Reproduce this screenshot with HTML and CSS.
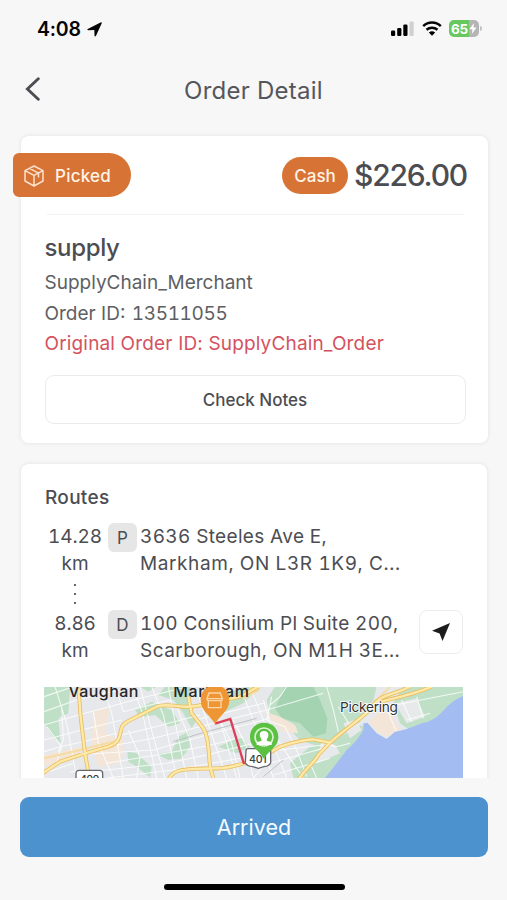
FILE: index.html
```html
<!DOCTYPE html>
<html lang="en">
<head>
<meta charset="utf-8">
<meta name="viewport" content="width=device-width, initial-scale=1">
<title>Order Detail</title>
<link rel="stylesheet" href="styles.css">
</head>
<body>
<div class="screen">
  <header class="status">
    <div class="clock"><span class="time">4:08</span>
      <svg class="loc" viewBox="0 0 16 16"><path d="M.8 7.4 14.4.4Q16.3-.1 15.6 1.6L9.6 14.7Q8.4 16.6 8 14.4L7.8 8.6 1.4 8.8Q-.6 8.4.8 7.4Z"/></svg>
    </div>
    <div class="indicators">
      <svg class="signal" viewBox="0 0 23 16"><rect x="0" y="9.5" width="4.2" height="5.5" rx="1.2"/><rect x="6.2" y="7" width="4.2" height="8" rx="1.2"/><rect x="12.3" y="3.5" width="4.2" height="11.5" rx="1.2"/><rect class="off" x="18.5" y="0.5" width="4.2" height="14.5" rx="1.2"/></svg>
      <svg class="wifi" viewBox="0 0 20 15"><path class="arc" d="M1.2 5.2C6.2.3 13.8.3 18.8 5.2M4.5 8.8C7.7 5.9 12.3 5.9 15.5 8.8"/><path d="M6.8 11.4Q10 8.9 13.2 11.4L10 14.7Z"/></svg>
      <div class="battery"><span>65</span><svg viewBox="0 0 8 11"><path d="M5 0 .5 6.2H3.5L2.8 11 7.6 4.6H4.5Z"/></svg></div>
    </div>
  </header>
  <nav class="topbar">
    <svg class="back" viewBox="0 0 16 24"><path d="M13.3 1.8 2.4 12 13.3 22.2"/></svg>
    <h1>Order Detail</h1>
  </nav>
  <main class="content">
    <section class="card order">
      <div class="summary">
        <div class="picked">
          <svg viewBox="0 0 20 22"><path d="M10 1 19 5.7V16L10 21 1 16V5.7ZM1 5.7 10 10.3 19 5.7M10 10.3V21M5.5 3.4 14.5 8.2V12.4"/></svg>
          <span>Picked</span>
        </div>
        <div class="payment"><span class="cash">Cash</span><span class="amount">$226.00</span></div>
      </div>
      <div class="details">
        <h2>supply</h2>
        <p class="merchant">SupplyChain_Merchant</p>
        <p class="oid">Order ID: <span>13511055</span></p>
        <p class="original">Original Order ID: SupplyChain_Order</p>
        <button class="notes">Check Notes</button>
      </div>
    </section>
    <section class="card routes">
      <h3>Routes</h3>
      <div class="stop">
        <div class="distance">14.28<br>km</div>
        <span class="tag">P</span>
        <p class="address a1">3636 Steeles Ave E,<br><span class="l2">Markham, ON L3R 1K9, C...</span></p>
      </div>
      <div class="dots"><i></i><i></i><i></i></div>
      <div class="stop">
        <div class="distance">8.86<br>km</div>
        <span class="tag">D</span>
        <p class="address a2">100 Consilium Pl Suite 200,<br><span class="l2">Scarborough, ON M1H 3E...</span></p>
        <button class="navigate" aria-label="Navigate"><svg viewBox="0 0 18 18"><path d="M0 7.8 18 0 10.5 18 7.6 10.6Z"/></svg></button>
      </div>
      <svg class="map" viewBox="12 21 1257 273" preserveAspectRatio="none">
        <rect class="land" x="0" y="0" width="1280" height="300"/>
        <g class="park">
          <path d="M0 0H92L85 100 55 115 62 190 38 170 12 130ZM285 90 335 65 395 90 420 130 385 140 345 105 300 112ZM262 215 290 220 335 262 330 292 290 260 265 245ZM375 20H450L450 90 470 120 455 145 430 100 400 60 355 45ZM415 170 445 155 450 200 425 235 385 240 350 222 395 215ZM300 20H350L325 35ZM535 200 600 170 630 200 590 220ZM560 40 620 20H660L610 70 545 100Z"/>
          <path d="M705 20H1010L1000 60 960 125 890 180 850 205 780 180 740 140 690 100 680 60ZM1090 20H1269V65L1200 110 1110 150 1080 130 1060 70ZM860 190 910 165 965 135 985 160 930 215 890 260 860 294H760L750 250 810 200Z"/>
        </g>
        <path class="darkpark" d="M735 20H820L840 60 862 115 858 160 820 170 780 130 725 115 705 85Z"/>
        <path class="sand" d="M160 90 210 85 195 160 250 180 245 250 175 260 155 200ZM985 125 1030 80 1060 110 1080 150 1040 170 1010 155ZM675 95 720 110 765 135 775 160 730 155 700 130ZM12 225 120 200 120 222 12 260Z"/>
        <path class="suburb" d="M1065 70 1130 55 1155 110 1100 130ZM910 130 945 120 965 150 930 175ZM845 180 885 195 900 220 830 250Z"/>
        <g class="streets">
          <path d="M12 50 100 20M12 95 110 60 280 20M12 135 115 105 320 50 440 21M12 180 125 150 245 120M12 215 60 200 130 185 230 160M250 95 390 60M245 165 340 142 480 105M230 195 340 175 500 135 680 90 850 40M150 222 340 210 500 165 690 115M200 250 350 225 500 198 610 170M90 275 200 270 380 250 500 225 660 185M200 294 400 270 600 235M460 80 640 40M465 120 670 70M610 225 720 210 850 195M670 255 760 230 850 205M700 285 870 235M12 280 100 250M1040 80 1269 35M1100 120 1170 100"/>
          <path d="M45 20 80 130 110 294M20 140 65 200 45 260M65 80 70 180 55 215M190 20 215 100 230 180 250 294M230 30 250 95M280 20 310 110 350 294M300 20 340 170 375 294M335 20 370 105 405 270M385 20 400 100 440 294M410 80 450 180 475 294M160 95 175 190 220 294M470 30 500 120 560 294M500 20 540 120 590 294M535 110 575 190 600 294M580 120 620 200 640 294M600 20 650 145 700 294M630 20 670 120 710 220 740 294M670 60 700 160 760 250 790 294M695 50 680 120 735 140 770 210 800 290M740 20 720 50 690 75M860 20 880 90 895 155M895 80 935 145M1085 60 1115 125M1130 50 1150 115M1045 100 1070 155M690 235 640 294M850 190 890 200 930 190M810 250 830 294M265 150 300 230 290 294"/>
        </g>
        <path class="water" d="M1269 48Q1235 62 1210 92Q1180 125 1145 130Q1100 150 1065 155L1040 177 1010 160 982 128 970 130 970 150Q950 185 920 210Q890 250 855 294H1269Z"/>
        <path class="rail" d="M400 185 500 155 650 115M670 290 730 240"/>
        <path class="secondary" d="M12 235 80 220 240 180M610 55 660 28M1050 20 1000 70"/>
        <path class="highway edge" d="M5 282 60 245 135 220 205 200C235 190 238 175 243 150C245 135 255 128 275 118L350 80C390 66 420 88 470 78L600 50 655 20M115 20 122 110 135 220 148 294M445 50 455 100 490 145C505 170 505 200 510 260L520 294M385 300C400 265 430 268 515 265C570 268 600 250 650 240L720 200C760 185 815 175 830 180L870 188M775 300C800 260 815 258 835 225L870 188C930 135 960 120 1000 80C1020 55 1080 60 1175 20M1000 75C1020 45 1060 45 1110 20"/>
        <path class="highway fill" d="M5 282 60 245 135 220 205 200C235 190 238 175 243 150C245 135 255 128 275 118L350 80C390 66 420 88 470 78L600 50 655 20M115 20 122 110 135 220 148 294M445 50 455 100 490 145C505 170 505 200 510 260L520 294M385 300C400 265 430 268 515 265C570 268 600 250 650 240L720 200C760 185 815 175 830 180L870 188M775 300C800 260 815 258 835 225L870 188C930 135 960 120 1000 80C1020 55 1080 60 1175 20M1000 75C1020 45 1060 45 1110 20"/>
        <g class="shield"><path d="M108 300V280Q108 271 118 271H179Q188 271 188 280V300Z"/><path d="M618 212Q618 206 625 206H684Q692 206 692 212V248Q688 258 672 260L655 265 638 260Q620 258 616 248Z"/></g>
        <text class="num" x="120" y="308" textLength="58">400</text>
        <text class="num" x="627" y="249" textLength="53">401</text>
        <text class="city" x="85" y="51" textLength="210">Vaughan</text>
        <text class="city" x="400" y="51" textLength="227">Markham</text>
        <text class="town" x="900" y="95" textLength="174">Pickering</text>
        <path class="route" d="M525 131 571 117 612 252"/>
        <path class="pickup" d="M525 132C510 104 482 94 482 60C482 34 500 16 525 16C550 16 568 34 568 60C568 94 540 104 525 132Z"/>
        <path class="store" d="M507 39H541L547 56H501ZM501 56Q501 62 507 62H541Q547 62 547 56M505 62V83H543V62"/>
        <path class="dropoff" d="M672 237C657 209 630 202 630 171C630 146 648 128 672 128C697 128 715 146 715 171C715 202 687 209 672 237Z"/>
        <circle class="face" cx="672" cy="171" r="27"/>
        <path class="person" d="M672 153C661 153 657 162 661 172Q665 178 665 182L650 187V195H695V187L680 182Q680 178 684 172C688 162 683 153 672 153Z"/>
      </svg>
    </section>
  </main>
  <footer class="bottom">
    <button class="arrived">Arrived</button>
    <div class="home"></div>
  </footer>
</div>
</body>
</html>
```
FILE: styles.css
```css
* { box-sizing: border-box; margin: 0; padding: 0; }
body { background: #f7f7f7; font-family: Inter, "Liberation Sans", sans-serif; color: #4c4d52; }
button { font: inherit; color: inherit; background: #fff; border: 0; }
svg { display: block; }
h1, h2, h3 { font-weight: 400; }
p, h1, h2, h3, span { white-space: nowrap; }

.screen { width: 507px; height: 900px; display: flex; flex-direction: column; overflow: hidden; }
.status { height: 58px; padding: 0 28px 0 37px; display: flex; justify-content: space-between; align-items: center; color: #050505; }
.clock { display: flex; align-items: center; gap: 6px; }
.time { font-size: 19.5px; font-weight: 600; letter-spacing: -.2px; }
.loc { width: 15px; height: 15px; fill: #050505; }
.indicators { display: flex; align-items: center; }
.signal { width: 23px; height: 16px; margin-right: 8px; }
.signal .off { fill: #d0d0d0; }
.wifi { width: 20px; height: 15px; margin-right: 7px; margin-top: -2px; }
.arc { fill: none; stroke: #050505; stroke-width: 2.5; }
.battery { width: 30px; height: 17px; border-radius: 5px; background: linear-gradient(90deg, #66c85e 0 66%, #b5b5b5 66%); display: flex; align-items: center; justify-content: center; gap: 1px; color: #fff; font-size: 13.5px; font-weight: 700; letter-spacing: -.3px; position: relative; margin-top: -1px; }
.battery svg { width: 8px; height: 11px; fill: #fff; }
.battery::after { content: ""; position: absolute; right: -3px; top: 6px; width: 2px; height: 5px; border-radius: 0 2px 2px 0; background: #c4c4c4; }

.topbar { height: 62px; padding: 0 25px; display: grid; grid-template-columns: 1fr auto 1fr; align-items: center; }
.back { width: 16px; height: 24px; fill: none; stroke: #4c4d52; stroke-width: 2.9; stroke-linecap: round; }
h1 { font-size: 24px; line-height: 30px; letter-spacing: .25px; padding-top: 3px; color: #55565b; }

.content { height: 658px; padding: 16px 19px 0 21px; overflow: hidden; }
.card { background: #fff; border-radius: 8px; box-shadow: 0 0 5px rgba(0, 0, 0, .09); }
.order { width: 467px; height: 307px; padding: 17px 24px 0; }
.summary { height: 62px; margin-left: 2px; border-bottom: 1px solid #f3f3f3; display: flex; justify-content: space-between; align-items: flex-start; }
.picked { width: 118px; height: 44px; margin-left: -34px; padding: 1px 0 0 11px; border-radius: 6px 22px 22px 6px; background: #d77435; color: #fff3e8; display: flex; align-items: center; gap: 11px; font-size: 17px; font-weight: 500; letter-spacing: .25px; }
.picked svg { width: 20px; height: 22px; fill: none; stroke: #fbe0cc; stroke-width: 1.5; stroke-linejoin: round; }
.payment { display: flex; align-items: center; gap: 6px; height: 44px; margin-right: -3px; }
.cash { width: 66px; height: 37px; border-radius: 19px; background: #d77435; color: #fff3e8; font-size: 17px; font-weight: 500; line-height: 38px; text-align: center; }
.amount { font-size: 30px; font-weight: 500; line-height: 44px; letter-spacing: -1.2px; }
h2 { font-size: 24px; font-weight: 500; line-height: 30px; margin-top: 18px; letter-spacing: -.35px; }
.details { margin-left: -.5px; }
.details p { font-size: 19px; line-height: 30.5px; color: #5e5f63; }
.details .merchant { margin-top: 5px; }
.details .oid span { font-variant-numeric: tabular-nums; letter-spacing: -.35px; margin-left: 1px; }
.details .original { color: #d4525f; letter-spacing: .16px; }
.notes { width: 421px; height: 49px; margin-top: 15px; border: 1.5px solid #ebebeb; border-radius: 9px; font-size: 17px; font-weight: 500; padding-top: 1px; }

.routes { width: 466px; height: 340px; margin-top: 21px; padding: 20px 24px 0 23px; }
h3 { font-size: 19px; font-weight: 500; line-height: 27px; padding-left: 1px; letter-spacing: .3px; }
.stop { display: flex; align-items: flex-start; height: 54px; font-size: 19px; line-height: 27px; font-variant-numeric: tabular-nums; }
h3 + .stop { margin-top: 12px; }
.distance { width: 62px; text-align: center; letter-spacing: -.1px; }
.tag { width: 29px; height: 29px; margin-left: 2px; border-radius: 6px; background: #e6e6e7; font-size: 17px; line-height: 30px; text-align: center; }
.address { width: 279px; margin-left: 3px; }
.a1 { letter-spacing: .35px; }
.a1 .l2 { letter-spacing: .6px; }
.a2 { letter-spacing: .33px; }
.a2 .l2 { letter-spacing: .46px; }
.dots { width: 62px; height: 33px; display: flex; flex-direction: column; align-items: center; justify-content: space-between; padding: 7px 0 6px; }
.dots i { width: 2px; height: 2px; background: #66676b; }
.navigate { width: 44px; height: 44px; flex: none; border: 1.5px solid #ececec; border-radius: 8px; display: grid; place-items: center; }
.navigate svg { width: 18px; height: 18px; fill: #1c1c1c; }
.map { width: 419px; height: 91px; margin-top: 23px; overflow: hidden; }
.land { fill: #e6e8eb; }
.park { fill: #bfe0c7; }
.darkpark { fill: #a4d3b1; }
.sand { fill: #f3e6d8; }
.suburb { fill: #e7eaea; }
.water { fill: #a3bdf2; }
.streets { fill: none; stroke: #fff; stroke-width: 3.2; opacity: .8; }
.rail { fill: none; stroke: #bfc2c5; stroke-width: 3; }
.secondary { fill: none; stroke: #f5dca3; stroke-width: 6; }
.highway { fill: none; stroke-linejoin: round; }
.edge { stroke: #e9bd62; stroke-width: 12; }
.fill { stroke: #ffe9a6; stroke-width: 7; }
.shield { fill: #fff; stroke: #66686b; stroke-width: 4; }
.num { font-size: 32px; font-weight: 500; fill: #3c3d40; }
.city { font-size: 48px; font-weight: 500; fill: #252628; }
.town { font-size: 41px; fill: #303134; stroke: #fff; stroke-width: 5; paint-order: stroke; }
.route { fill: none; stroke: #dc3e58; stroke-width: 7; }
.pickup { fill: #ee9534; }
.store { fill: none; stroke: #fbd6a8; stroke-width: 4; }
.dropoff { fill: #5cc143; }
.face { fill: none; stroke: #d9f4d0; stroke-width: 5; }
.person { fill: #fff; }

.bottom { flex: 1; padding: 19px 19px 0 20px; display: flex; flex-direction: column; align-items: center; }
.arrived { width: 468px; height: 60px; border-radius: 9px; background: #4c92cf; color: #f4fbff; font-size: 21.5px; line-height: 61px; }
.home { width: 181px; height: 6px; margin-top: 27px; border-radius: 3px; background: #000; }
```
